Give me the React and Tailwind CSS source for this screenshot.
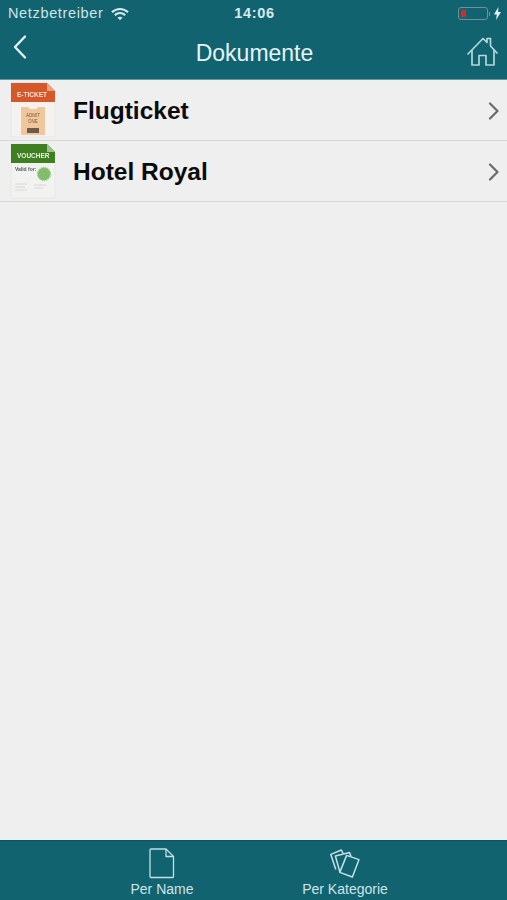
const Wifi = () => (
  <svg width="18" height="14" viewBox="0 0 19 14" fill="none" stroke="#d5e8ec" strokeWidth="2.2">
    <path d="M1 5.2C6 .6 13 .6 18 5.2" />
    <path d="M4 8.2C7.2 5.4 11.8 5.4 15 8.2" />
    <path d="M9.5 13.5L6.8 10.8C8.4 9.6 10.6 9.6 12.2 10.8Z" fill="#d5e8ec" stroke="none" />
  </svg>
);

const Battery = () => (
  <div className="flex items-center">
    <div className="w-[30px] h-[13px] rounded-[3px] border border-[#6d929c] p-[2px]">
      <div className="w-[5px] h-full rounded-[1px] bg-[#e0262c]" />
    </div>
    <div className="w-[1.5px] h-[4px] ml-[1px] bg-[#6d929c]" />
    <svg className="ml-[4px]" width="7" height="13" viewBox="0 0 7 13" fill="#e6f1f3">
      <path d="M4.4 0L0 7.4h2.8L2 13l5-8H4.1z" />
    </svg>
  </div>
);

const Back = () => (
  <svg width="16" height="26" viewBox="0 0 16 26" fill="none" stroke="#e3f0f2" strokeWidth="2.4" strokeLinecap="round" strokeLinejoin="round">
    <path d="M13 2.5L3 13l10 10.5" />
  </svg>
);

const Home = () => (
  <svg width="31" height="30" viewBox="0 0 31 30" fill="none" stroke="#b5d6dc" strokeWidth="1.7" strokeLinejoin="round" strokeLinecap="round">
    <path d="M1 17L16 1.5l4 4V1.5h3.5V9L30 16" />
    <path d="M5 13.5V28h7V18.5h7V28h8V13" />
  </svg>
);

const Chevron = () => (
  <svg className="mt-[1px]" width="11" height="18" viewBox="0 0 11 18" fill="none" stroke="#6b6b6b" strokeWidth="2.2" strokeLinecap="round" strokeLinejoin="round">
    <path d="M2 1.5L9.5 9 2 16.5" />
  </svg>
);

const ETicket = () => (
  <svg className="blur-[0.4px]" width="46" height="56" viewBox="0 0 46 56">
    <path d="M1 1h36l8 8v46H1z" fill="#f4f1ee" stroke="#e2e2e0" strokeWidth="0.6" />
    <path d="M1 1h36l8 8v11H1z" fill="#d5582a" />
    <path d="M37 1l8 8h-8z" fill="#eda27f" />
    <text x="7" y="14.5" fontSize="6.5" fontWeight="700" fill="#fbe7dc" fontFamily="Liberation Sans, sans-serif">E-TICKET</text>
    <path d="M11 25h7c1 3 9 3 10 0h7v28H11z" fill="#f0c79c" />
    <text x="23" y="35" fontSize="4.5" textAnchor="middle" fill="#7a5a3c" fontFamily="Liberation Sans, sans-serif">ADMIT</text>
    <text x="23" y="41" fontSize="4.5" textAnchor="middle" fill="#7a5a3c" fontFamily="Liberation Sans, sans-serif">ONE</text>
    <path d="M17 46h12v5H17z" fill="#6e5a48" />
  </svg>
);

const Voucher = () => (
  <svg className="blur-[0.4px]" width="46" height="56" viewBox="0 0 46 56">
    <path d="M1 1h36l8 8v46H1z" fill="#f2f3f1" stroke="#e0e0de" strokeWidth="0.6" />
    <path d="M1 1h36l8 8v11H1z" fill="#3f7f22" />
    <path d="M37 1l8 8h-8z" fill="#9cc487" />
    <text x="7" y="14.5" fontSize="6.5" fontWeight="700" fill="#e7f3df" fontFamily="Liberation Sans, sans-serif">VOUCHER</text>
    <text x="5" y="28" fontSize="5" fontWeight="700" fill="#55585a" fontFamily="Liberation Sans, sans-serif">Valid for:</text>
    <circle cx="34" cy="31" r="6.5" fill="#82bd6c" stroke="#9fce8c" strokeWidth="1.5" strokeDasharray="1.2 1" />
    <path d="M5 41h12M5 44h10M5 47h12M24 42h12M24 45h9" stroke="#d6d8d6" strokeWidth="1" />
  </svg>
);

const Doc = () => (
  <svg width="26" height="31" viewBox="0 0 26 31" fill="none" stroke="#c2e0e5" strokeWidth="1.3" strokeLinejoin="round">
    <path d="M2 1h15l7.5 7.5V28.5a1 1 0 0 1-1 1H2a1 1 0 0 1-1-1V2a1 1 0 0 1 1-1z" />
    <path d="M17 1v7.5h7.5" />
  </svg>
);

const Cards = () => (
  <svg width="30" height="30" viewBox="0 0 30 30" fill="none" stroke="#c2e0e5" strokeWidth="1.5" strokeLinejoin="round">
    <path d="M5.8 20.5L.8 5.4 11.4 1l1.8 3.6" />
    <path d="M10 23.5L5.4 7 19.5 3.6l1.6 4" />
    <path d="M16.6 6.4L29 10.6 22.4 28 9.8 23.4z" fill="#11636f" />
  </svg>
);

const Row = ({ icon, label }) => (
  <div className="flex items-center h-[61px] pl-[10px] pr-[8px] border-b border-[#d6d6d6]">
    {icon}
    <span className="ml-[17px] text-[24.5px] leading-[30px] pt-[2px] font-bold text-[#0b0b0b] grow">{label}</span>
    <Chevron />
  </div>
);

const Tab = ({ icon, label, className }) => (
  <div className={`flex flex-col items-center gap-[2px] ${className}`}>
    <div className="h-[31px] flex items-center">{icon}</div>
    <span className="text-[14px] leading-[16px] text-[#cfe3e7]">{label}</span>
  </div>
);

export default function App() {
  return (
    <div className="w-[507px] h-[900px] flex flex-col bg-[#efefef] font-['Liberation_Sans',Arial,sans-serif] overflow-hidden">
      <header className="h-[80px] bg-[#11636f] border-b border-[#5f97a1] flex flex-col shrink-0">
        <div className="h-[27px] pl-[8px] pr-[6px] flex items-center">
          <div className="flex items-center gap-[7px] flex-1">
            <span className="text-[14.5px] tracking-[0.65px] text-[#cfe3e7]">Netzbetreiber</span>
            <Wifi />
          </div>
          <span className="text-[14.5px] font-bold text-[#d9e9ec] tracking-[0.7px]">14:06</span>
          <div className="flex-1 flex justify-end"><Battery /></div>
        </div>
        <div className="grow flex items-center pl-[12px] pr-[9px]">
          <div className="flex-1 pb-[12px]"><Back /></div>
          <h1 className="text-[23px] text-[#e6f3f5] font-normal pt-[1px] pr-[1px]">Dokumente</h1>
          <div className="flex-1 flex justify-end pb-[3px]"><Home /></div>
        </div>
      </header>

      <main className="grow">
        <Row icon={<ETicket />} label="Flugticket" />
        <Row icon={<Voucher />} label="Hotel Royal" />
      </main>

      <footer className="h-[60px] bg-[#11636f] border-t border-[#0d5561] flex shrink-0 pt-[7px]">
        <Tab icon={<Doc />} label="Per Name" className="w-[162px] ml-[81px]" />
        <Tab icon={<Cards />} label="Per Kategorie" className="w-[162px] ml-[21px]" />
      </footer>
    </div>
  );
}
